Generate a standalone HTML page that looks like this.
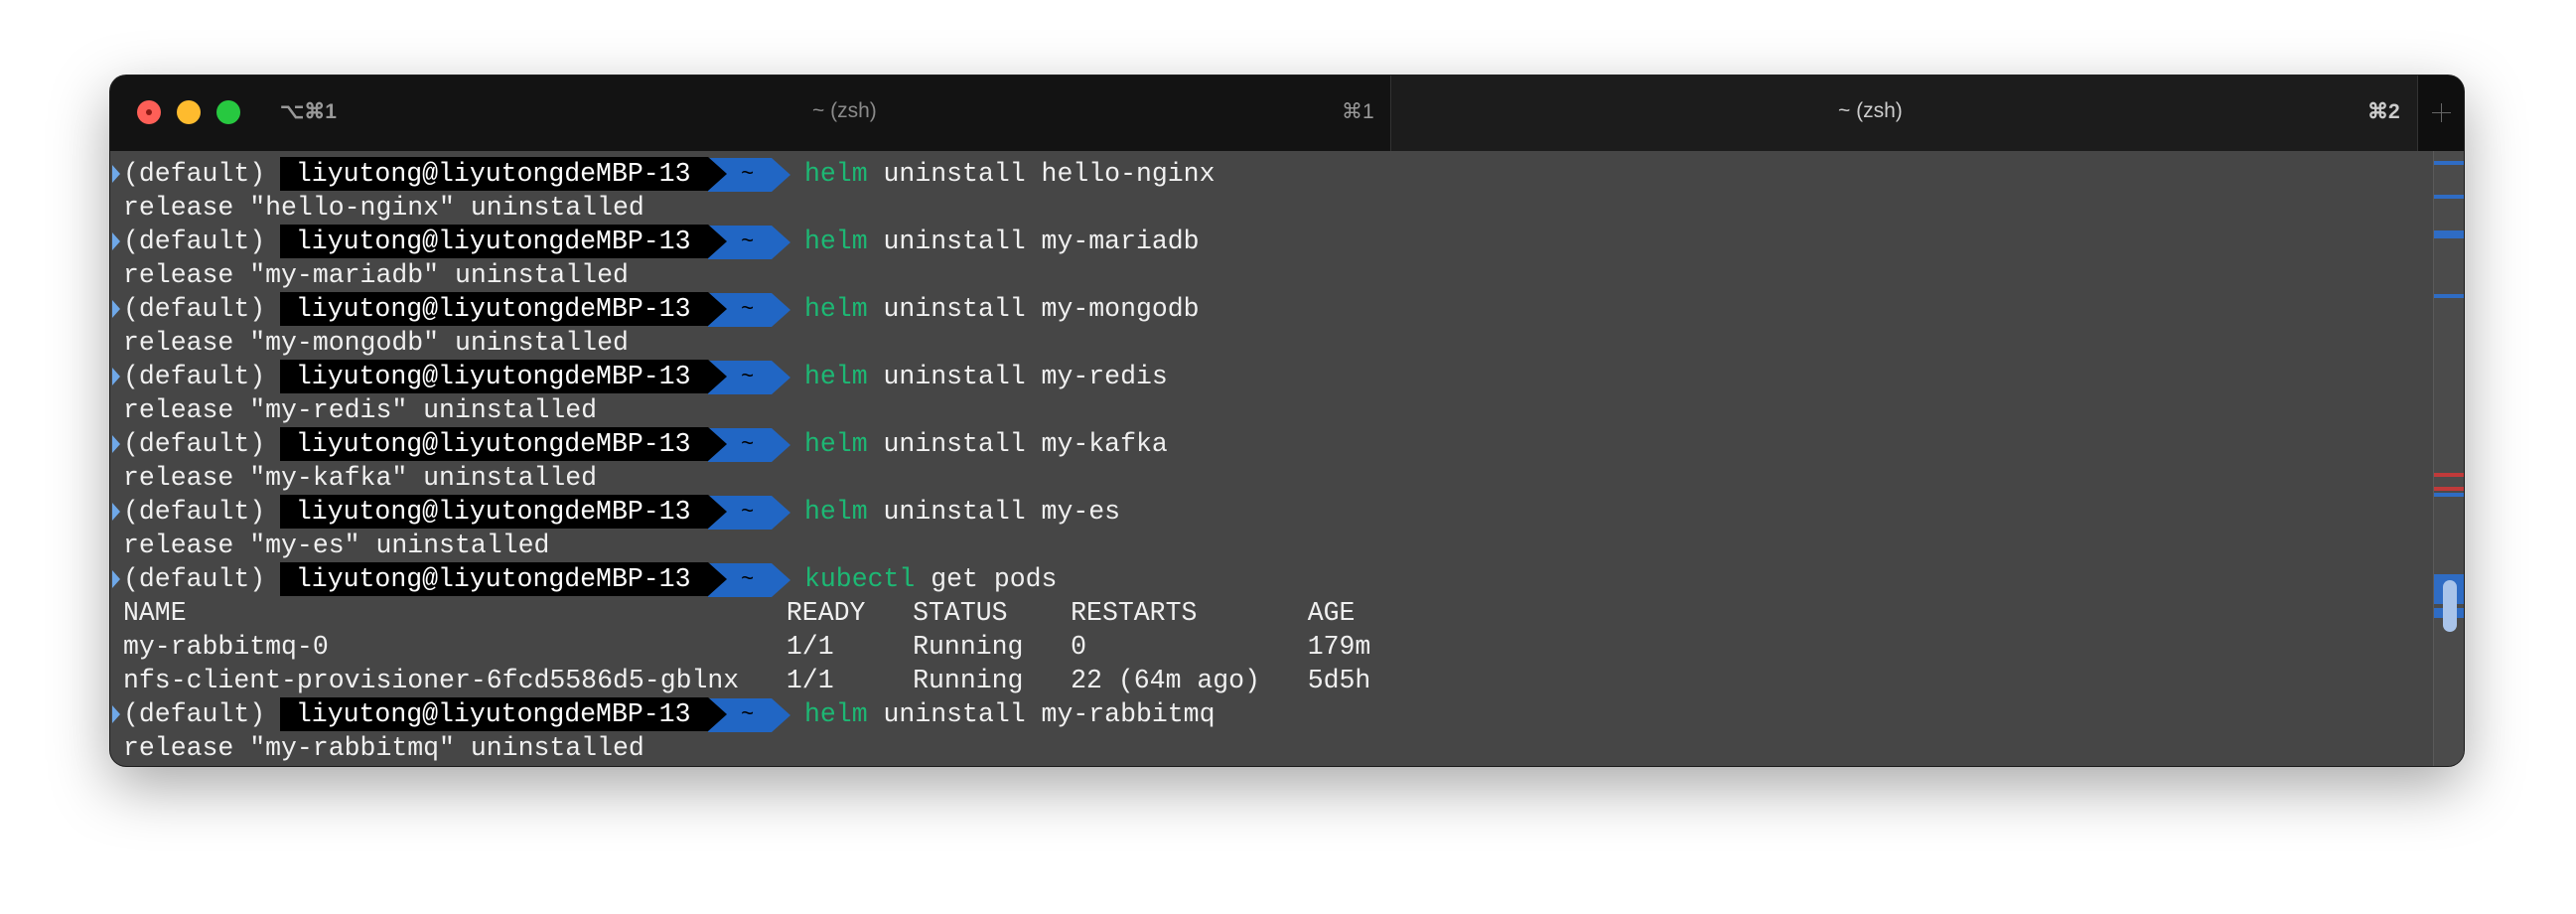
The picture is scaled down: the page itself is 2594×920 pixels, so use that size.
<!DOCTYPE html>
<html><head><meta charset="utf-8"><style>
body{margin:0;width:2594px;height:920px;background:#fff;overflow:hidden;position:relative;font-family:"Liberation Mono",monospace}
.win{position:absolute;left:111px;top:76px;width:2370px;height:695px;border-radius:16px;background:#464646;overflow:hidden;box-shadow:0 20px 60px rgba(0,0,0,.35),0 0 0 1px #222}
.tb{position:absolute;left:0;top:0;width:100%;height:76px;background:#131313}
.tab2{position:absolute;left:1289px;top:0;width:1034px;height:76px;background:#1c1c1c;border-left:1px solid #333}
.plus{position:absolute;left:2323px;top:0;width:47px;height:76px;background:#0f0f0f;border-left:1px solid #333}
.dot{position:absolute;top:25px;width:24px;height:24px;border-radius:50%}
.tt{position:absolute;top:24px;color:#8a8a8a;font-family:"Liberation Sans",sans-serif;font-size:21px}
.ln{position:absolute;left:13px;height:34px;line-height:34px;font-size:26.5px;color:#f0f0f0;white-space:pre}
.ind{position:absolute;left:2px;top:8px;width:0;height:0;border-left:8px solid #6fa8e8;border-top:9px solid transparent;border-bottom:9px solid transparent}
.bk{position:absolute;left:171px;top:0;width:431px;height:34px;background:#000;color:#fff}
.bl{position:absolute;left:602px;top:1px;width:64px;height:34px;background:#2166c4;color:#000;font-size:22px}
.bl span{position:absolute;left:33px;top:0}
.bla{position:absolute;left:666px;top:1px;border-left:19px solid #2166c4;border-top:17px solid transparent;border-bottom:17px solid transparent}
.bka{position:absolute;left:602px;top:0;border-left:19px solid #000;border-top:17px solid transparent;border-bottom:17px solid transparent}
.cmd{position:absolute;left:699px;top:0}
.g{color:#1db874}
.sb{position:absolute;left:2339px;top:76px;width:31px;height:619px;background:#4b4b4b;border-left:1px solid #5a5a5a}
.mk{position:absolute;left:0;width:31px;height:4px;background:#2f6cc4}
</style></head><body>
<div class="win">
<div class="tb"></div><div class="tab2"></div><div class="plus"><div style="position:absolute;left:14px;top:37px;width:19px;height:1px;background:#666"></div><div style="position:absolute;left:23px;top:28px;width:1px;height:19px;background:#666"></div></div>
<div class="dot" style="left:27px;background:#fe5f57"><div style="position:absolute;left:9px;top:9px;width:6px;height:6px;border-radius:50%;background:#8b1a14"></div></div>
<div class="dot" style="left:67px;background:#febb2e"></div>
<div class="dot" style="left:107px;background:#27c840"></div>
<div class="tt" style="left:171px;font-weight:bold;color:#999">⌥⌘1</div>
<div class="tt" style="left:707px">~ (zsh)</div>
<div class="tt" style="left:1240px;color:#999">⌘1</div>
<div class="tt" style="left:1740px;color:#ccc">~ (zsh)</div>
<div class="tt" style="left:2273px;color:#ccc;font-weight:bold">⌘2</div>
<div class="sb">
<div class="mk" style="top:10px"></div><div class="mk" style="top:44px"></div><div class="mk" style="top:80px;height:8px"></div><div class="mk" style="top:144px"></div>
<div class="mk" style="top:324px;background:#c03a3a"></div><div class="mk" style="top:338px;background:#c03a3a"></div><div class="mk" style="top:344px"></div>
<div class="mk" style="top:426px;height:30px"></div><div class="mk" style="top:460px;height:10px"></div>
<div style="position:absolute;left:9px;top:432px;width:14px;height:52px;border-radius:7px;background:#a9c4ea"></div>
</div>
</div>
<div id="c"></div>
<script>
var L=[
['p','helm','uninstall hello-nginx'],['o','release "hello-nginx" uninstalled'],
['p','helm','uninstall my-mariadb'],['o','release "my-mariadb" uninstalled'],
['p','helm','uninstall my-mongodb'],['o','release "my-mongodb" uninstalled'],
['p','helm','uninstall my-redis'],['o','release "my-redis" uninstalled'],
['p','helm','uninstall my-kafka'],['o','release "my-kafka" uninstalled'],
['p','helm','uninstall my-es'],['o','release "my-es" uninstalled'],
['p','kubectl','get pods'],
['o','NAME                                      READY   STATUS    RESTARTS       AGE'],
['o','my-rabbitmq-0                             1/1     Running   0              179m'],
['o','nfs-client-provisioner-6fcd5586d5-gblnx   1/1     Running   22 (64m ago)   5d5h'],
['p','helm','uninstall my-rabbitmq'],['o','release "my-rabbitmq" uninstalled']];
var h='';
L.forEach(function(l,i){var t=158+34*i;
if(l[0]=='o')h+='<div class="ln" style="left:124px;top:'+t+'px">'+l[1].replace(/"/g,'&quot;')+'</div>';
else h+='<div class="ln" style="left:111px;top:'+t+'px;width:900px"><div class="ind"></div><span style="position:absolute;left:13px">(default)</span><div class="bl"><span>~</span></div><div class="bla"></div><div class="bk"> liyutong@liyutongdeMBP-13</div><div class="bka"></div><div class="cmd"><span class="g">'+l[1]+'</span> '+l[2]+'</div></div>';});
document.getElementById('c').innerHTML=h;
</script>
</body></html>
